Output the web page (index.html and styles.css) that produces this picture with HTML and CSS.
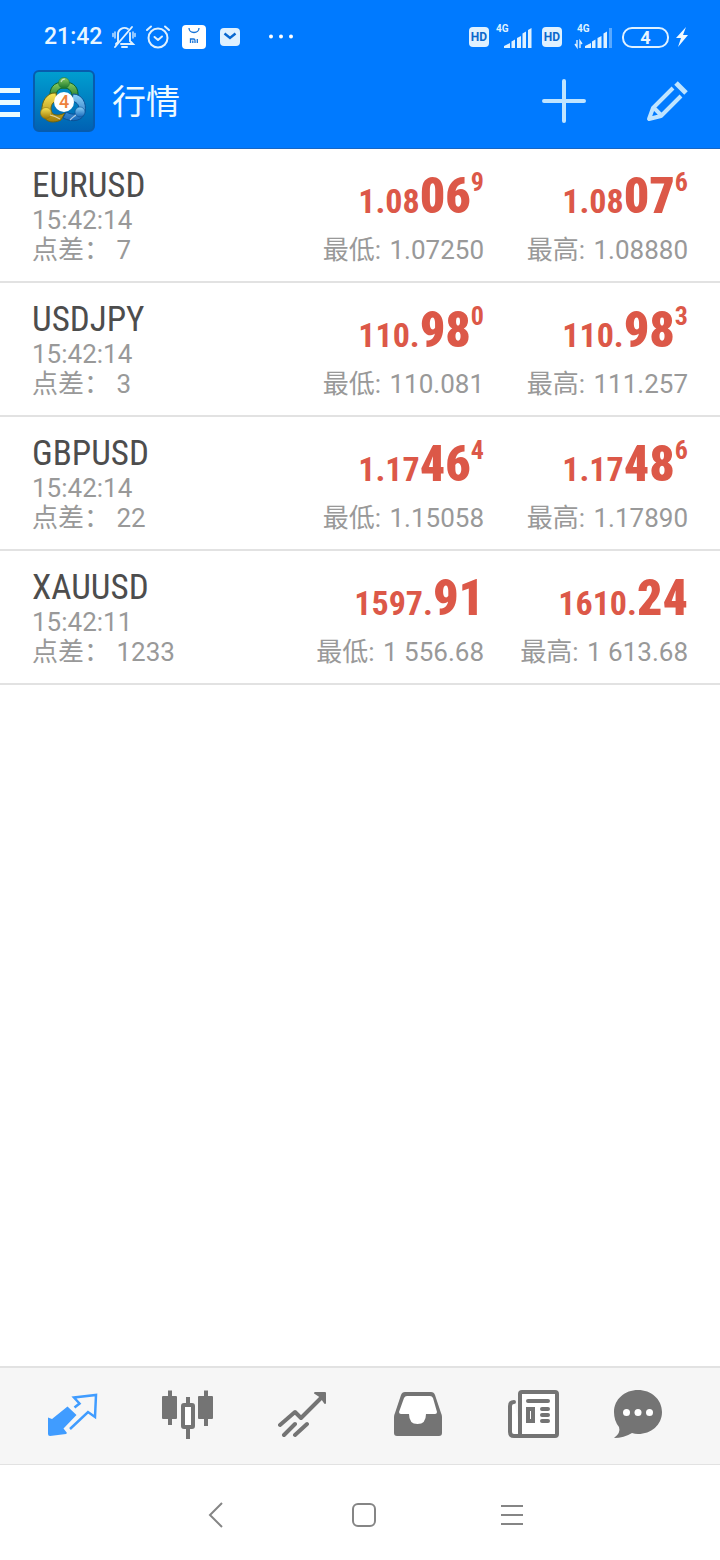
FILE: index.html
```html
<!DOCTYPE html>
<html lang="zh-CN">
<head>
<meta charset="utf-8">
<meta name="viewport" content="width=device-width, initial-scale=1">
<title>行情</title>
<link rel="stylesheet" href="styles.css">
</head>
<body>
<header class="top">
  <div class="status">
    <div class="status-left">
      <span class="clock">21:42</span>
      <svg class="bell" width="24" height="24" viewBox="0 0 24 24" fill="none" stroke="#dff1ff" stroke-width="1.9" stroke-linecap="round"><path d="M6 17V10a6.500 6.500 0 0 1 10-6M18 8v8l3 3H9M6 17l-2 2"/><path d="M3 22 20 2"/><path d="M10 22h5" stroke-width="2"/><path d="M3 7v6M1 8.500v3M21 7v6M23 8.500v3" stroke-width="1.300"/></svg>
      <svg class="alarm" width="26" height="24" viewBox="0 0 26 24" fill="none" stroke="#dff1ff" stroke-width="2" stroke-linecap="round" stroke-linejoin="round"><circle cx="13" cy="13" r="9.500"/><path d="M9.500 12l3.500 3 4-3.500M2 5l4-3.500M24 5l-4-3.500"/></svg>
      <svg class="mi" width="24" height="24" viewBox="0 0 24 24"><rect width="24" height="24" rx="4" fill="#fff"/><g fill="none" stroke="#1673d8" stroke-width="1.300"><path d="M7 3a5 4.500 0 0 0 10 0"/><path d="M8.500 18v-4h3q1.500 0 1.500 1.500V18M10.800 15.500V18M15.300 14v4"/></g></svg>
      <svg class="mail" width="20" height="18" viewBox="0 0 20 18"><rect width="20" height="18" rx="4" fill="#dff1ff"/><path d="M4.500 5.500 10 10l5.500-4.500" fill="none" stroke="#0a68cf" stroke-width="2.400"/></svg>
      <svg class="dots" width="26" height="6" viewBox="0 0 26 6" fill="#fff"><circle cx="3" cy="2.500" r="2"/><circle cx="13" cy="2.500" r="2"/><circle cx="23" cy="2.500" r="2"/></svg>
    </div>
    <div class="status-right">
      <span class="hd">HD</span>
      <svg class="signal" width="36" height="28" viewBox="0 0 36 28" fill="#dff1ff"><text class="net" x="0" y="11">4G</text><path d="M8 27v-2l6-3v5zM15.500 20.500l3.500-2V27h-3.500zM21 17l4-2v12h-4zM26.500 12.500l3.500-2V27h-3.500zM32 9l3.500-2v20H32z"/></svg>
      <span class="hd">HD</span>
      <svg class="signal" width="38" height="28" viewBox="0 0 38 28" fill="#dff1ff"><text class="net" x="3" y="11">4G</text><path d="M11 27v-2l6-3v5zM18 20.500l3.500-2V27H18zM23.500 17l4-2v12h-4zM29.500 12.500l3.500-2V27h-3.500z"/><path d="M35 7h3v20h-3z" opacity=".4"/><path d="M3 19v7l-2-3M6 27v-7l2 3" fill="none" stroke="#dff1ff" stroke-width="1.400"/></svg>
      <span class="battery">4</span>
      <svg class="bolt" width="14" height="20" viewBox="0 0 14 20"><path d="M11 0 1 11h5L3 20 13 8H8z" fill="#f2faff"/></svg>
    </div>
  </div>
  <div class="appbar">
    <button class="icon-btn menu" aria-label="菜单"><svg width="20" height="32" viewBox="0 0 20 32" fill="#e9fbff"><path d="M0 3h20v5H0zM0 15h20v5H0zM0 27h20v5H0z"/></svg></button>
    <svg class="logo" width="62" height="62" viewBox="0 0 62 62">
      <defs>
        <linearGradient id="bg" x1="0" y1="0" x2="0" y2="1"><stop offset="0" stop-color="#009fd0"/><stop offset="1" stop-color="#0061b3"/></linearGradient>
        <linearGradient id="green" x1="0" y1="0" x2="0" y2="1"><stop offset="0" stop-color="#8ed162"/><stop offset="1" stop-color="#16732c"/></linearGradient>
        <linearGradient id="gold" x1="0" y1="0" x2="0" y2="1"><stop offset="0" stop-color="#f9e759"/><stop offset="1" stop-color="#a17c08"/></linearGradient>
        <linearGradient id="sky" x1="0" y1="0" x2="0" y2="1"><stop offset="0" stop-color="#8bd1f8"/><stop offset="1" stop-color="#1769bb"/></linearGradient>
      </defs>
      <rect x="1" y="1" width="60" height="60" rx="5" fill="url(#bg)" stroke="#075cae" stroke-width="2"/>
      <path d="M17 29C16 18 20 12 31 12s15 6 14 17l-6-2c0-5-2-9-8-9s-8 4-8 9z" fill="url(#green)" stroke="#0c602d"/>
      <path d="M23 23C14 22 8 32 9 41s8 14 19 9l4-7c-8 4-14 2-14-4 0-5 3-8 6-8z" fill="url(#gold)" stroke="#6d6510"/>
      <path d="M40 24c9 0 14 9 12 18s-12 11-22 6l3-6c8 4 13 2 13-3s-3-7-7-8z" fill="url(#sky)" stroke="#0b5196"/>
      <circle cx="31" cy="13" r="5.500" fill="url(#green)" stroke="#1d7a35" stroke-width=".6"/><circle cx="13" cy="43" r="5.500" fill="url(#gold)" stroke="#8f7610" stroke-width=".6"/><circle cx="47" cy="42" r="5" fill="url(#sky)" stroke="#0b5196" stroke-width=".6"/>
      <path d="M17 45q5 1 10 4M28 12q1-3 4-3M43 45q-3 2-6 5" fill="none" stroke="#fff" stroke-width="1.200" opacity=".6"/>
      <circle cx="31" cy="32" r="10" fill="#fff"/>
      <text class="logo-num" x="31" y="38" text-anchor="middle">4</text>
    </svg>
    <h1 class="title">行情</h1>
    <button class="icon-btn add" aria-label="添加"><svg width="44" height="44" viewBox="0 0 44 44" stroke="#bfe4ff" stroke-width="4" stroke-linecap="round"><path d="M22 2v40M2 22h40"/></svg></button>
    <button class="icon-btn edit" aria-label="编辑"><svg width="42" height="42" viewBox="0 0 42 42" fill="none" stroke="#bfe4ff" stroke-width="4" stroke-linejoin="round"><path d="M27 8 7 28 3 39l12-3 20-20M8 28l7 7"/><path d="M30 3l10 10" stroke-width="5"/></svg></button>
  </div>
</header>

<main class="quotes">
  <section class="row">
    <div class="info"><h2 class="symbol">EURUSD</h2><p class="meta">15:42:14</p><p class="meta">点差： 7</p></div>
    <div class="quote"><p class="price">1.08<b class="big">06</b><span class="pip">9</span></p><p class="meta"><span class="label">最低:</span> 1.07250</p></div>
    <div class="quote"><p class="price">1.08<b class="big">07</b><span class="pip">6</span></p><p class="meta"><span class="label">最高:</span> 1.08880</p></div>
  </section>
  <section class="row">
    <div class="info"><h2 class="symbol">USDJPY</h2><p class="meta">15:42:14</p><p class="meta">点差： 3</p></div>
    <div class="quote"><p class="price">110.<b class="big">98</b><span class="pip">0</span></p><p class="meta"><span class="label">最低:</span> 110.081</p></div>
    <div class="quote"><p class="price">110.<b class="big">98</b><span class="pip">3</span></p><p class="meta"><span class="label">最高:</span> 111.257</p></div>
  </section>
  <section class="row">
    <div class="info"><h2 class="symbol">GBPUSD</h2><p class="meta">15:42:14</p><p class="meta">点差： 22</p></div>
    <div class="quote"><p class="price">1.17<b class="big">46</b><span class="pip">4</span></p><p class="meta"><span class="label">最低:</span> 1.15058</p></div>
    <div class="quote"><p class="price">1.17<b class="big">48</b><span class="pip">6</span></p><p class="meta"><span class="label">最高:</span> 1.17890</p></div>
  </section>
  <section class="row">
    <div class="info"><h2 class="symbol">XAUUSD</h2><p class="meta">15:42:11</p><p class="meta">点差： 1233</p></div>
    <div class="quote"><p class="price">1597.<b class="big">91</b></p><p class="meta"><span class="label">最低:</span> 1 556.68</p></div>
    <div class="quote"><p class="price">1610.<b class="big">24</b></p><p class="meta"><span class="label">最高:</span> 1 613.68</p></div>
  </section>
</main>

<nav class="tabs">
  <button class="icon-btn" aria-label="行情" aria-current="page"><svg width="50" height="50" viewBox="0 0 50 50"><path d="M19.500 17.500 28.500 26 15.500 39.500 19 44l-1 1L2 47q-2 0-2-2V28.500l4 1.500z" fill="#409cff"/><path d="M26.500 18.500l5-4L26 8.500l22-2.500-1 22-7-5-18 17" fill="none" stroke="#409cff" stroke-width="2.500"/></svg></button>
  <button class="icon-btn" aria-label="图表"><svg width="52" height="50" viewBox="0 0 52 50"><path d="M6 1.500h4V7h4q1 0 1 1v21q0 1-1 1h-4v6H6v-6H1q-1 0-1-1V8q0-1 1-1h5zM42 1.500h4V7h4q1 0 1 1v21q0 1-1 1h-4v7h-4v-7h-5q-1 0-1-1V8q0-1 1-1h5z" fill="#747474"/><path d="M26 8v6M26 40v10" stroke="#747474" stroke-width="4"/><rect x="21" y="16" width="10" height="22" rx="1" fill="#fff" stroke="#747474" stroke-width="4"/></svg></button>
  <button class="icon-btn" aria-label="交易"><svg width="50" height="50" viewBox="0 0 50 50" fill="none" stroke="#747474" stroke-width="4" stroke-linecap="round" stroke-linejoin="round"><path d="M2 36l15-13 6 6L45 7M6 46l11-11M17 46l12-11"/><path d="M37 4h10v10l-4-6z" fill="#747474" stroke-width="2"/></svg></button>
  <button class="icon-btn" aria-label="邮箱"><svg width="50" height="50" viewBox="0 0 50 50"><path d="M12 3h26q3 0 4 3l6 18q1 2 1 4v16q0 3-3 3H4q-3 0-3-3V28q0-2 1-4L8 6q1-3 4-3z" fill="#747474"/><path d="M14 7h23q2 0 3 2l4 14q0 2-2 2h-9q0 10-8.500 10T16 25H8q-2 0-2-2L11 9q1-2 3-2z" fill="#fff"/></svg></button>
  <button class="icon-btn" aria-label="新闻"><svg width="52" height="50" viewBox="0 0 52 50" fill="none" stroke="#747474" stroke-width="4" stroke-linecap="round"><path d="M7 13q-4 0-4 4v26q0 4 4 4h8" fill="#fff"/><rect x="13" y="3" width="37" height="44" rx="2" fill="#fff"/><path d="M21 12h20M35 20h6M35 26h6M35 32h6"/><rect x="21" y="20" width="5" height="12"/></svg></button>
  <button class="icon-btn" aria-label="聊天"><svg width="50" height="50" viewBox="0 0 50 50"><path d="M25 1c13 0 24 9 24 22S38 45 25 45q-3 0-6-1-8 5-18 5 7-5 5-11-5-6-5-15C1 10 12 1 25 1z" fill="#747474"/><g fill="#fff"><circle cx="13.500" cy="23.500" r="3.500"/><circle cx="25" cy="23.500" r="3.500"/><circle cx="36.500" cy="23.500" r="3.500"/></g></svg></button>
</nav>
<footer class="sysnav">
  <button class="icon-btn" aria-label="返回"><svg width="16" height="26" viewBox="0 0 16 26" fill="none" stroke="#858585" stroke-width="2"><path d="M14 1 2 13l12 12"/></svg></button>
  <button class="icon-btn" aria-label="主页"><svg width="26" height="26" viewBox="0 0 26 26" fill="none" stroke="#858585" stroke-width="2"><rect x="2" y="2" width="22" height="22" rx="5"/></svg></button>
  <button class="icon-btn" aria-label="最近任务"><svg width="22" height="26" viewBox="0 0 22 26" stroke="#858585" stroke-width="2"><path d="M0 4h22M0 13h22M0 22h22"/></svg></button>
</footer>
</body>
</html>
```
FILE: styles.css
```css
* { box-sizing: border-box; margin: 0; padding: 0; }
body {
  display: flex;
  flex-direction: column;
  min-height: 100vh;
  background: #fff;
  font-family: Roboto, "Noto Sans CJK SC", sans-serif;
}
svg { display: block; flex: none; }
.icon-btn { display: flex; align-items: center; justify-content: center; border: 0; background: none; }

.top { padding-top: 20px; background: #007aff; border-bottom: 1px solid #1766c4; }
.status { display: flex; justify-content: space-between; height: 34px; padding: 0 31px 0 44px; }
.status-left, .status-right { display: flex; align-items: center; }
.clock { margin-right: 10px; color: #e9f6ff; font-size: 23px; font-weight: 500; line-height: 34px; }
.bell { margin-right: 9px; }
.alarm { margin-right: 11px; }
.mi { margin-right: 14px; }
.mail { margin-right: 28px; }
.hd {
  width: 20px;
  border-radius: 4px;
  background: #dff1ff;
  color: #0b68cc;
  font-size: 12px;
  font-weight: 700;
  line-height: 20px;
  text-align: center;
}
.signal { margin: 0 10px 4px 7px; overflow: visible; }
.hd ~ .hd + .signal { margin-left: 12px; }
.net { font-size: 10px; font-weight: 700; }
.battery {
  width: 47px;
  border: 2px solid #dff1ff;
  border-radius: 10px;
  color: #e9f6ff;
  font-size: 18px;
  font-weight: 700;
  line-height: 17px;
  text-align: center;
}
.bolt { margin-left: 6px; }

.appbar { display: flex; align-items: center; height: 94px; padding-right: 32px; }
.menu { margin-right: 13px; }
.logo-num { fill: #ee813c; font-size: 18px; font-weight: 500; }
.title {
  flex: 1;
  margin-left: 17px;
  padding-top: 2px;
  color: #eefaff;
  font-size: 34px;
  font-weight: 400;
  line-height: 48px;
}
.edit { margin-left: 60px; }

.quotes { flex: 1; }
.row {
  display: grid;
  grid-template-columns: 1fr 1fr 204px;
  padding: 18px 32px 16px;
  border-bottom: 2px solid #e2e2e2;
}
.symbol {
  color: #4d4d4d;
  font-family: "Roboto Condensed", "Liberation Sans Narrow", Roboto, sans-serif;
  font-size: 35px;
  font-weight: 400;
  line-height: 38px;
}
.meta { color: #999; font-size: 26px; font-weight: 400; line-height: 30px; white-space: nowrap; }
.label { margin-right: 2px; }
.quote { display: flex; flex-direction: column; align-items: flex-end; }
.price {
  display: flex;
  align-items: baseline;
  height: 68px;
  color: #dc5848;
  font-family: "Roboto Condensed", "Liberation Sans Narrow", Roboto, sans-serif;
  font-size: 34px;
  font-weight: 700;
  line-height: 58px;
}
.big { font-size: 50px; }
.pip { align-self: flex-start; font-size: 26px; line-height: 30px; }

.tabs {
  display: grid;
  grid-template-columns: repeat(5, 115fr) 94fr;
  padding: 21px 35px 25px 15px;
  border-top: 2px solid #e2e2e2;
  border-bottom: 1px solid #e2e2e2;
  background: #f6f6f6;
}
.sysnav { display: grid; grid-template-columns: repeat(3, 1fr); height: 95px; padding: 0 134px 0 142px; }
.sysnav .icon-btn { height: 100px; }
```
